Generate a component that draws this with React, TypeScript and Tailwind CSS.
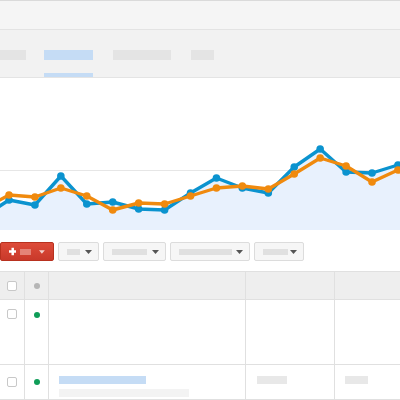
import React from "react";

const blue = [217, 200, 205, 176, 204, 202, 209, 210, 193, 178, 188, 193, 167, 149, 172, 173, 165, 158];
const orange = [209, 195, 197, 188, 196, 210, 203, 204, 196, 188, 186, 189, 174, 158, 166, 182, 170, 160];
const TOP = 78;
const H = 152;

function pts(vals: number[]) {
  return vals.map((v, i) => [9 + 25.93 * (i - 1), v - TOP] as [number, number]);
}

function Chart() {
  const b = pts(blue);
  const o = pts(orange);
  const line = (p: [number, number][]) => p.map((q) => `${q[0].toFixed(1)},${q[1].toFixed(1)}`).join(" ");
  const area = `${b[0][0]},${H} ${line(b)} ${b[b.length - 1][0]},${H}`;
  return (
    <svg width="400" height={H} viewBox={`0 0 400 ${H}`} className="block">
      <line x1="0" y1={170 - TOP + 0.5} x2="400" y2={170 - TOP + 0.5} stroke="#e6e6e6" strokeWidth="1" />
      <polygon points={area} fill="#e8f1fd" />
      <polyline points={line(b)} fill="none" stroke="#0b93cf" strokeWidth="3.4" strokeLinejoin="round" />
      {b.map((q, i) => (
        <circle key={"b" + i} cx={q[0]} cy={q[1]} r="3.8" fill="#0b93cf" />
      ))}
      <polyline points={line(o)} fill="none" stroke="#f08a0e" strokeWidth="3.4" strokeLinejoin="round" />
      {o.map((q, i) => (
        <circle key={"o" + i} cx={q[0]} cy={q[1]} r="3.8" fill="#f08a0e" />
      ))}
    </svg>
  );
}

function Caret({ color }: { color: string }) {
  return (
    <svg width="7" height="4" viewBox="0 0 7 4" className="block">
      <polygon points="0,0 7,0 3.5,4" fill={color} />
    </svg>
  );
}

function GrayBtn({ w, bar }: { w: string; bar: string }) {
  return (
    <div className={`${w} h-[19px] flex items-center justify-between pl-[8px] pr-[6px] bg-[#f6f6f6] border border-[#dcdcdc] rounded-[2px]`}>
      <div className={`${bar} h-[6px] bg-[#e0e0e0]`} />
      <Caret color="#555555" />
    </div>
  );
}

function Checkbox() {
  return <div className="w-[10px] h-[10px] bg-white border border-[#c8c8c8] rounded-[2px]" />;
}

export default function App() {
  return (
    <div className="w-[400px] h-[400px] overflow-hidden bg-white" style={{ fontFamily: "'Liberation Sans', Arial, sans-serif" }}>
      <div className="h-[30px] bg-[#f5f5f5] border-t border-t-[#dadada] border-b border-b-[#e3e3e3]" />
      <div className="h-[48px] bg-[#f2f2f2] border-b border-b-[#e4e4e4] flex gap-[18px]">
        <div className="w-[26px] pt-[20px]">
          <div className="h-[10px] bg-[#e4e4e4]" />
        </div>
        <div className="w-[49px] pt-[20px] flex flex-col justify-between">
          <div className="h-[10px] bg-[#c5dcf5]" />
          <div className="h-[4px] bg-[#c5dcf5]" />
        </div>
        <div className="w-[58px] pt-[20px] ml-[2px]">
          <div className="h-[10px] bg-[#e4e4e4]" />
        </div>
        <div className="w-[23px] pt-[20px] ml-[2px]">
          <div className="h-[10px] bg-[#e4e4e4]" />
        </div>
      </div>
      <Chart />
      <div className="mt-[12px] flex items-center gap-[4px] h-[19px]">
        <div className="w-[54px] h-[19px] flex items-center pl-[8px] pr-[8px] gap-[4px] rounded-[2px] border border-[#b8311f] bg-gradient-to-b from-[#dd4b39] to-[#c9392a]">
          <svg width="9" height="9" viewBox="0 0 9 9" className="block">
            <rect x="3" y="0" width="3" height="9" fill="#ffffff" />
            <rect x="0" y="3" width="9" height="3" fill="#ffffff" />
          </svg>
          <div className="w-[13px] h-[6px] bg-[#e48377]" />
          <div className="flex-1" />
          <Caret color="#f3d0cb" />
        </div>
        <GrayBtn w="w-[41px]" bar="w-[13px]" />
        <GrayBtn w="w-[63px]" bar="w-[35px]" />
        <GrayBtn w="w-[80px]" bar="w-[53px]" />
        <GrayBtn w="w-[50px]" bar="w-[25px]" />
      </div>
      <div className="mt-[10px] border-t border-[#e0e0e0]">
        <div className="grid grid-cols-[25px_24px_197px_89px_1fr] h-[28px] bg-[#eeeeee] border-b border-[#e0e0e0]">
          <div className="border-r border-[#e0e0e0] flex items-center justify-center">
            <Checkbox />
          </div>
          <div className="border-r border-[#e0e0e0] flex items-center justify-center">
            <div className="w-[6px] h-[6px] rounded-full bg-[#b5b5b5]" />
          </div>
          <div className="border-r border-[#e0e0e0]" />
          <div className="border-r border-[#e0e0e0]" />
          <div />
        </div>
        <div className="grid grid-cols-[25px_24px_197px_89px_1fr] h-[65px] border-b border-[#e0e0e0]">
          <div className="border-r border-[#e0e0e0] flex justify-center pt-[9px]">
            <Checkbox />
          </div>
          <div className="border-r border-[#e0e0e0] flex justify-center pt-[12px]">
            <div className="w-[6px] h-[6px] rounded-full bg-[#0f9d58]" />
          </div>
          <div className="border-r border-[#e0e0e0]" />
          <div className="border-r border-[#e0e0e0]" />
          <div />
        </div>
        <div className="grid grid-cols-[25px_24px_197px_89px_1fr] h-[35px] border-b border-[#e0e0e0]">
          <div className="border-r border-[#e0e0e0] flex justify-center pt-[12px]">
            <Checkbox />
          </div>
          <div className="border-r border-[#e0e0e0] flex justify-center pt-[14px]">
            <div className="w-[6px] h-[6px] rounded-full bg-[#0f9d58]" />
          </div>
          <div className="border-r border-[#e0e0e0] pl-[10px] pt-[11px] flex flex-col gap-[5px]">
            <div className="w-[87px] h-[8px] bg-[#c5dcf5]" />
            <div className="w-[130px] h-[8px] bg-[#f3f3f3]" />
          </div>
          <div className="border-r border-[#e0e0e0] pl-[11px] pt-[11px]">
            <div className="w-[30px] h-[8px] bg-[#e8e8e8]" />
          </div>
          <div className="pl-[10px] pt-[11px]">
            <div className="w-[23px] h-[8px] bg-[#e8e8e8]" />
          </div>
        </div>
      </div>
    </div>
  );
}
